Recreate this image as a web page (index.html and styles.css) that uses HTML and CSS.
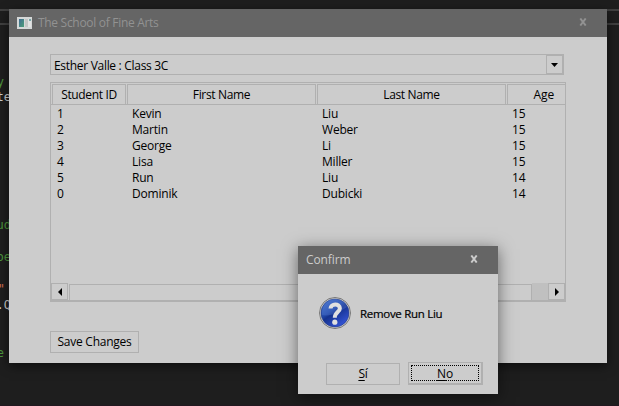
FILE: index.html
```html
<!DOCTYPE html>
<html lang="en">
<head>
<meta charset="utf-8">
<title>The School of Fine Arts</title>
<link rel="stylesheet" href="styles.css">
</head>
<body>
<div class="desktop">
  <div class="editor">
    <div class="tabline"></div>
    <span class="code l1">y</span>
    <span class="code l2">te</span>
    <span class="code l3">ud</span>
    <span class="code l4">be</span>
    <span class="code l5">"</span>
    <span class="code l6">.Q</span>
    <span class="code l7">e</span>
  </div>

  <section class="window main">
    <header class="titlebar inactive">
      <svg class="appicon" width="15" height="12" viewBox="0 0 15 12"><defs><linearGradient id="a" x2="1" y2="1"><stop stop-color="#426b94"/><stop offset="1" stop-color="#4c9f78"/></linearGradient></defs><path fill="#d5d8d8" d="M0 0h15v12H0z"/><path fill="url(#a)" d="M2 2h5v8H2z"/><path fill="#c3c6c5" d="M8 2h3v8H8z"/><path fill="#e2e3e3" d="M11 2h3v8h-3z"/><path fill="#78a7a8" d="M12 2h2v2h-2z"/></svg>
      <h1 class="title">The School of Fine Arts</h1>
      <svg class="close" width="8" height="8" viewBox="0 0 8 8"><path d="M1.300.5l5.400 7M6.700.5l-5.400 7"/></svg>
    </header>
    <div class="content">
      <div class="combo"><span class="value">Esther Valle : Class 3C</span><span class="drop"><svg width="7" height="4" viewBox="0 0 7 4"><path d="M0 0h7L3.500 4z"/></svg></span></div>
      <div class="table">
        <div class="row head"><span class="h"><b>Student ID</b></span><span class="h"><b>First Name</b></span><span class="h"><b>Last Name</b></span><span class="h end"><b>Age</b></span></div>
        <div class="body">
          <div class="row"><span>1</span><span>Kevin</span><span>Liu</span><span>15</span></div>
          <div class="row"><span>2</span><span>Martin</span><span>Weber</span><span>15</span></div>
          <div class="row"><span>3</span><span>George</span><span>Li</span><span>15</span></div>
          <div class="row"><span>4</span><span>Lisa</span><span>Miller</span><span>15</span></div>
          <div class="row"><span>5</span><span>Run</span><span>Liu</span><span>14</span></div>
          <div class="row"><span>0</span><span>Dominik</span><span>Dubicki</span><span>14</span></div>
        </div>
        <div class="scroll">
          <span class="arrow left"><svg width="4" height="8" viewBox="0 0 4 8"><path d="M4 0v8L0 4z"/></svg></span>
          <span class="thumb"></span><span class="track"></span>
          <span class="arrow right"><svg width="4" height="8" viewBox="0 0 4 8"><path d="M0 0v8l4-4z"/></svg></span>
        </div>
      </div>
      <button class="btn save">Save Changes</button>
    </div>
  </section>

  <section class="window dialog">
    <header class="titlebar">
      <h2 class="title">Confirm</h2>
      <svg class="close" width="8" height="8" viewBox="0 0 8 8"><path d="M1.300.5l5.400 7M6.700.5l-5.400 7"/></svg>
    </header>
    <div class="message">
      <svg width="32" height="32" viewBox="0 0 32 32"><defs><linearGradient id="q" x2=".7" y2="1"><stop stop-color="#4978d2"/><stop offset=".45" stop-color="#2149aa"/><stop offset=".55" stop-color="#15328e"/><stop offset="1" stop-color="#3555d8"/></linearGradient></defs><circle cx="16" cy="16" r="15.500" fill="#d0d0d0" stroke="#777"/><circle cx="16" cy="16" r="14" fill="url(#q)" stroke="#243b85" stroke-width=".6"/><path d="M3 18C11 20 21 15 28 10 26 4 20 2 16 2 7 2 2 10 3 18z" fill="#6a91df" opacity=".28"/><path d="M11.500 11.500C11.700 6.300 20.700 6.100 20.900 11.300 20.900 15.200 15.800 15.200 15.800 20.700" fill="none" stroke="#e0e0e0" stroke-width="4"/><circle cx="15.800" cy="25.200" r="2.600" fill="#e0e0e0"/></svg>
      <p>Remove Run Liu</p>
    </div>
    <div class="actions"><button class="btn yes"><u>S</u>í</button><button class="btn no"><span class="focus"><u>N</u>o</span></button></div>
  </section>
</div>
</body>
</html>
```
FILE: styles.css
```css
* { box-sizing: border-box; }
body { margin: 0; font: 12px/16px "Open Sans", "Noto Sans", sans-serif; letter-spacing: -.2px; color: #000; }
h1, h2, p { margin: 0; font: inherit; }
b { font-weight: 400; }
svg { display: block; flex: none; }
.desktop { position: relative; width: 619px; height: 406px; overflow: hidden; background: #1e1e1e; border-bottom: 1px solid #221820; }
.tabline { margin-top: 9px; height: 16px; border: solid #404040; border-width: 2px 0; }
.editor { display: flow-root; }
.code { position: absolute; right: 610px; font: 12px/16px "DejaVu Sans Mono", monospace; letter-spacing: 0; color: #4d963d; white-space: pre; }
.l1 { top: 74px; right: 615px; }
.l2 { top: 89px; right: 608px; color: #ccc; }
.l3 { top: 217px; right: 608px; }
.l4 { top: 249px; right: 608px; }
.l5 { top: 281px; right: 614px; color: #d16d51; }
.l6 { top: 297px; right: 608px; color: #ccc; }
.l7 { top: 345px; right: 615px; }

.window { position: absolute; background: #ccc; }
.main { left: 9px; top: 9px; width: 598px; height: 354px; box-shadow: 0 3px 10px rgba(0,0,0,.55); }
.dialog { left: 298px; top: 246px; width: 200px; height: 148px; box-shadow: 0 3px 15px rgba(0,0,0,.5); }
.titlebar { display: flex; align-items: center; height: 28px; padding: 0 20px 0 8px; background: #656565; color: #ccc; letter-spacing: -.1px; }
.inactive { color: #929292; letter-spacing: -.3px; }
.appicon { margin-right: 6px; }
.title { flex: 1; }
.close { fill: none; stroke: currentColor; stroke-width: 2; margin-top: -2px; }
.content { padding: 17px 41px; }
.combo { display: flex; align-items: center; width: 514px; height: 21px; border: 1px solid #b0b0b0; padding-left: 3px; }
.value { flex: 1; padding-top: 2px; letter-spacing: -.3px; }
.drop { display: flex; align-items: center; justify-content: center; width: 17px; height: 19px; border: 1px solid #b0b0b0; }
.table { display: flex; flex-direction: column; width: 516px; height: 220px; margin-top: 7px; border: 1px solid #b0b0b0; border-bottom-width: 2px; }
.row { display: grid; grid-template-columns: 75px 190px 190px 1fr; height: 16px; }
.row > span { padding-left: 6px; }
.head { height: 22px; padding-top: 1px; border-bottom: 1px solid #b0b0b0; letter-spacing: -.35px; }
.row > .h { display: flex; justify-content: center; padding: 2px 0 0; margin-left: 1px; border: solid #b0b0b0; border-width: 1px 1px 0; height: 20px; }
.row > .end { justify-content: flex-end; padding-right: 11px; border-right: 0; letter-spacing: -.12px; }
.body { flex: 1; padding-top: 1px; }
.scroll { display: flex; height: 17px; }
.arrow { display: flex; align-items: center; justify-content: center; width: 17px; border: 1px solid #b0b0b0; }
.thumb { flex: 1; margin: 1px 0 0 1px; border: 1px solid #b0b0b0; border-bottom: 0; }
.track { width: 16px; background: #c0c0c0; }
.btn { display: flex; align-items: center; justify-content: center; padding: 0; margin: 0; border: 1px solid #b0b0b0; border-radius: 0; background: transparent; color: inherit; font: inherit; letter-spacing: inherit; }
.save { width: 89px; height: 22px; margin-top: 29px; letter-spacing: -.25px; }
.message { display: flex; align-items: center; gap: 9px; height: 78px; padding-left: 21px; font-size: 11.500px; letter-spacing: -.3px; }
.message p { padding-top: 2px; -webkit-text-stroke: .2px #000; }
.actions { display: flex; gap: 8px; padding: 10px 15px 0 28px; }
.yes { width: 74px; height: 22px; margin-top: 1px; }
.no { width: 75px; height: 23px; border-right-width: 2px; border-bottom-width: 2px; padding: 2px; }
.focus { flex: 1; height: 16px; line-height: 15px; border: 1px dotted #000; }
u { text-underline-offset: 2px; }
```
